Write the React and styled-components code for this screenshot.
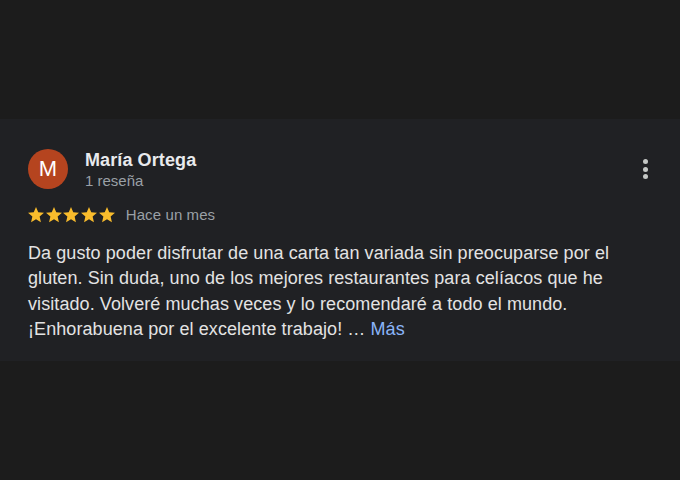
import React from "react";
import styled, { createGlobalStyle } from "styled-components";

const Global = createGlobalStyle`
  html, body {
    margin: 0;
    padding: 0;
    background: #1c1c1c;
    font-family: "Liberation Sans", Arial, Helvetica, sans-serif;
  }
`;

const Page = styled.div`
  width: 680px;
  height: 480px;
  background: #1c1c1c;
  padding-top: 119px;
  box-sizing: border-box;
`;

const Card = styled.article`
  background: #202124;
  height: 242px;
  box-sizing: border-box;
  padding: 31px 28px 0 28px;
  display: flex;
  flex-direction: column;
`;

const Header = styled.div`
  display: flex;
  align-items: flex-start;
`;

const Avatar = styled.div`
  width: 40px;
  height: 40px;
  border-radius: 50%;
  background: #b5441f;
  color: #fff;
  display: flex;
  align-items: center;
  justify-content: center;
  font-size: 22px;
  line-height: 1;
  flex-shrink: 0;
  margin-top: -1px;
`;

const Info = styled.div`
  flex: 1;
  margin-left: 17px;
  display: flex;
  flex-direction: column;
`;

const Name = styled.div`
  color: #e8eaed;
  font-size: 18px;
  font-weight: 700;
  line-height: 21px;
  letter-spacing: 0.1px;
`;

const Meta = styled.div`
  color: #9aa0a6;
  font-size: 15px;
  line-height: 20px;
`;

const Kebab = styled.button`
  width: 24px;
  height: 24px;
  margin: 7px -5px 0 0;
  padding: 0;
  border: none;
  background: transparent;
  display: flex;
  flex-direction: column;
  align-items: center;
  justify-content: center;
  gap: 2.6px;
  cursor: pointer;
`;

const Dot = styled.span`
  width: 5px;
  height: 5px;
  border-radius: 50%;
  background: #c4c7c5;
`;

const RatingRow = styled.div`
  display: flex;
  align-items: center;
  margin-top: 14px;
  height: 20px;
`;

const Stars = styled.div`
  display: flex;
  gap: 1.7px;
  margin-right: 11px;
`;

const Time = styled.span`
  color: #9aa0a6;
  font-size: 15px;
  line-height: 20px;
  letter-spacing: 0.1px;
`;

const Body = styled.p`
  margin: 16px 0 0 0;
  color: #e3e3e3;
  font-size: 18px;
  line-height: 25.4px;
  letter-spacing: 0.08px;
  width: 616px;
`;

const More = styled.a`
  color: #8ab4f8;
  text-decoration: none;
  cursor: pointer;
`;

const Star = () => (
  <svg width="16" height="15.4" viewBox="2 2 20 19.27" aria-hidden="true">
    <path
      fill="#f9bc2c"
      d="M12 17.27L18.18 21l-1.64-7.03L22 9.24l-7.19-.61L12 2 9.19 8.63 2 9.24l5.46 4.73L5.82 21z"
    />
  </svg>
);

export default function App() {
  return (
    <>
      <Global />
      <Page>
        <Card>
          <Header>
            <Avatar>M</Avatar>
            <Info>
              <Name>María Ortega</Name>
              <Meta>1 reseña</Meta>
            </Info>
            <Kebab aria-label="Más opciones">
              <Dot />
              <Dot />
              <Dot />
            </Kebab>
          </Header>
          <RatingRow>
            <Stars>
              {[0, 1, 2, 3, 4].map((i) => (
                <Star key={i} />
              ))}
            </Stars>
            <Time>Hace un mes</Time>
          </RatingRow>
          <Body>
            Da gusto poder disfrutar de una carta tan variada sin preocuparse por el
            gluten. Sin duda, uno de los mejores restaurantes para celíacos que he
            visitado. Volveré muchas veces y lo recomendaré a todo el mundo.
            ¡Enhorabuena por el excelente trabajo!{"\u00a0…\u00a0"}<More>Más</More>
          </Body>
        </Card>
      </Page>
    </>
  );
}
